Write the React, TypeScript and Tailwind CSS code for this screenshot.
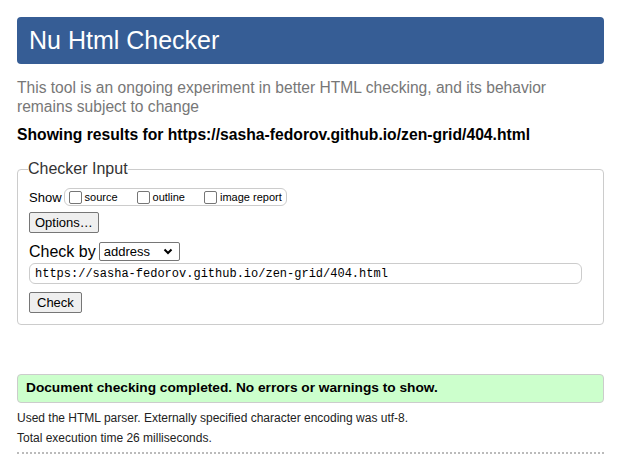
import React from 'react';

const Box = ({ label }: { label: string }) => (
  <label className="flex items-center gap-[3px]">
    <span className="inline-block w-[13px] h-[13px] border border-[#767676] rounded-[2px] bg-white" />
    <span>{label}</span>
  </label>
);

export default function App() {
  return (
    <div className="min-h-[456px] bg-white pl-[17px] pr-[19px] pt-[17px] font-['Liberation_Sans',Arial,sans-serif] text-black">
      {/* Header */}
      <div className="h-[47px] rounded-[4px] bg-[#365d95] flex items-center px-[12px]">
        <h1 className="text-[25px] text-white leading-none">Nu Html Checker</h1>
      </div>

      <p className="mt-[14px] text-[15.6px] leading-[19px] text-[#777]">
        This tool is an ongoing experiment in better HTML checking, and its behavior remains subject to change
      </p>

      <p className="mt-[10px] text-[15.7px] leading-[18px] font-bold">
        Showing results for https://sasha-fedorov.github.io/zen-grid/404.html
      </p>

      {/* Checker input */}
      <fieldset className="mt-[16px] border border-[#ccc] rounded-[4px] px-[11px] pb-[11px]">
        <legend className="text-[16px] leading-[18px] text-[#333] -ml-px">Checker Input</legend>

        <div className="mt-[10px] flex items-center text-[13px] leading-[15px]">
          <span className="mr-[2px]">Show</span>
          <div className="flex items-center h-[18px] border border-[#ccc] rounded-[6px] pl-[4px] pr-[4px] text-[11px]">
            <Box label="source" />
            <span className="w-[19px]" />
            <Box label="outline" />
            <span className="w-[19px]" />
            <Box label="image report" />
          </div>
        </div>

        <button className="mt-[6px] block h-[21px] px-[5px] border border-[#767676] rounded-[2px] bg-[#efefef] text-[13px] leading-none">
          Options…
        </button>

        <div className="mt-[9px] flex items-center">
          <span className="text-[16px] leading-[19px] mr-[3px]">Check by</span>
          <div className="flex items-center justify-between w-[81px] h-[19px] border border-[#767676] rounded-[2px] pl-[4px] pr-[6px] text-[13px]">
            <span>address</span>
            <svg width="10" height="7" viewBox="0 0 10 7">
              <path d="M1.5 1.5 L5 5 L8.5 1.5" fill="none" stroke="#000" strokeWidth="2" />
            </svg>
          </div>
        </div>

        <div className="mt-[2px] w-[553px] h-[21px] border border-[#ccc] rounded-[6px] flex items-center pl-[5px] font-['Liberation_Mono','Courier_New',monospace] text-[12px]">
          https://sasha-fedorov.github.io/zen-grid/404.html
        </div>

        <button className="mt-[8px] block h-[21px] px-[7px] border border-[#767676] rounded-[2px] bg-[#efefef] text-[13px] leading-none">
          Check
        </button>
      </fieldset>

      {/* Result */}
      <div className="mt-[49px] h-[29px] rounded-[4px] border border-[#ccc] bg-[#ccffcc] flex items-center pl-[8px] text-[13.7px] font-bold">
        Document checking completed. No errors or warnings to show.
      </div>

      <p className="mt-[8px] text-[12px] leading-[14px] text-[#222]">
        Used the HTML parser. Externally specified character encoding was utf-8.
      </p>
      <p className="mt-[6px] text-[12px] leading-[14px] text-[#222]">Total execution time 26 milliseconds.</p>

      <div className="mt-[7px] border-t-2 border-dotted border-[#bbb]" />
    </div>
  );
}
